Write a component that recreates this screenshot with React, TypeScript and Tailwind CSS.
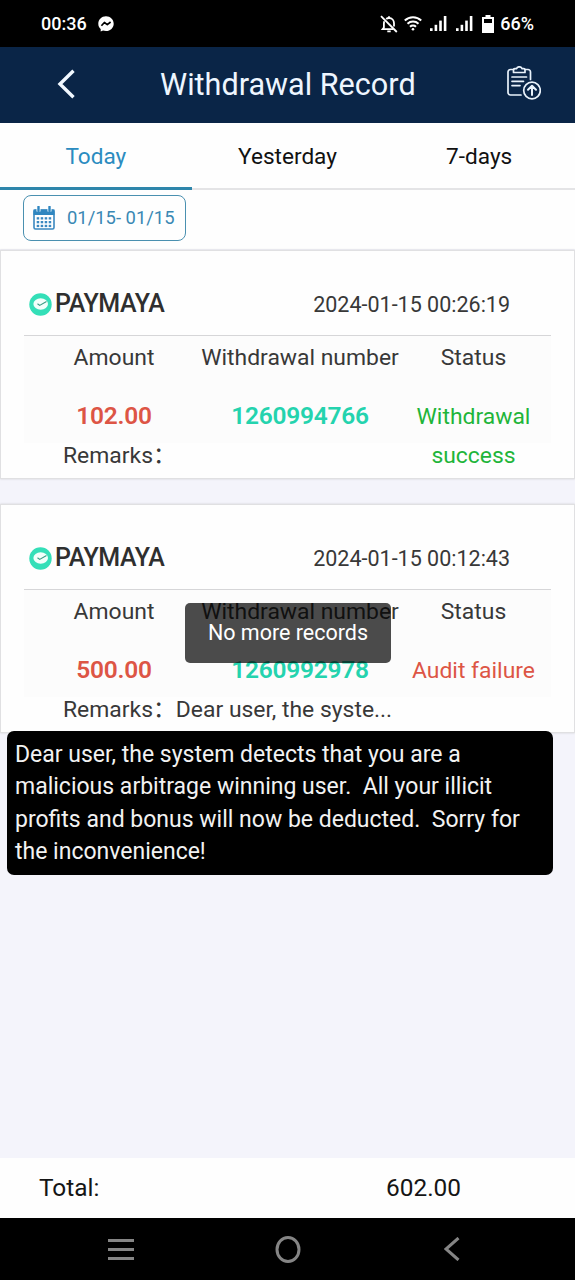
import { FunctionComponent, ReactNode } from "react";

interface IRecord {
    id: string
    time: string
    amount: string
    status: string
    statusColor: string
    remarks: string
}

const records: IRecord[] = [
    {
        id: "1260994766",
        time: "2024-01-15 00:26:19",
        amount: "102.00",
        status: "Withdrawal success",
        statusColor: "text-[#1fb53a]",
        remarks: "",
    },
    {
        id: "1260992978",
        time: "2024-01-15 00:12:43",
        amount: "500.00",
        status: "Audit failure",
        statusColor: "text-[#dd5545]",
        remarks: "Dear user, the syste...",
    },
];

const SignalIcon: FunctionComponent = () => (
    <svg className="w-[17px] h-4" viewBox="0 0 17 16" fill="#fff">
        <rect x="0" y="12.2" width="2.6" height="2.8" />
        <rect x="4.6" y="8.8" width="2.6" height="6.2" />
        <rect x="9.2" y="4.6" width="2.6" height="10.4" />
        <rect x="13.8" y="0" width="2.6" height="15" />
    </svg>
);

const StatusBar: FunctionComponent = () => (
    <div className="h-[47px] shrink-0 bg-black text-white flex items-center pl-[41px] pr-[41px]">
        <span className="text-[18px] leading-6 font-medium w-[57px] whitespace-nowrap">00:36</span>
        <svg className="w-4 h-4" viewBox="0 0 16 16">
            <path d="M8 .3C3.600.3.3 3.500.3 7.700c0 2.300.9 4.100 2.400 5.400v2.500l2.300-1.100c.9.300 1.900.500 3 .500 4.400 0 7.700-3.200 7.700-7.300S12.400.3 8 .3z" fill="#fff" />
            <path d="M3.400 9.800 6.400 6.500 9.300 8.600 12.600 6" fill="none" stroke="#000" strokeWidth="1.7" strokeLinejoin="round" />
        </svg>
        <div className="ml-auto flex items-center">
            <svg className="w-[18px] h-[18px] mr-[6px]" viewBox="0 0 18 18" fill="none" stroke="#fff" strokeWidth="1.8">
                <path d="M1 1.200 16.800 17" />
                <path d="M4.300 6.200C4 7 3.900 7.600 3.900 8.500v4L2.600 14.200h10.600" />
                <path d="M6.200 4C7 3.300 8 3 9 3c3 0 5 2.300 5 5.300v3.200" />
                <path d="M9 3V1.200M7.300 16.300h3.400" />
            </svg>
            <svg className="w-[18px] h-[15px] mr-[8px]" viewBox="0 0 18 15" fill="none" stroke="#fff" strokeWidth="2">
                <path d="M.8 4.500a11.800 11.800 0 0 1 16.400 0" />
                <path d="M3.500 7.800a8 8 0 0 1 11 0" />
                <path d="M6 10.800a4.400 4.400 0 0 1 6 0" />
                <circle cx="9" cy="13.300" r="1.300" fill="#fff" stroke="none" />
            </svg>
            <SignalIcon />
            <span className="w-[9px]" />
            <SignalIcon />
            <svg className="w-3 h-[18px] ml-[9px] mr-[6px]" viewBox="0 0 12 18">
                <path d="M3.500 0h5v2H12v16H0V2h3.500z" fill="#fff" />
                <rect x="2" y="4" width="8" height="4" fill="#000" />
            </svg>
            <span className="text-[18px] leading-6 font-medium whitespace-nowrap">66%</span>
        </div>
    </div>
);

const Header: FunctionComponent = () => (
    <div className="h-[76px] shrink-0 bg-[#0a2547] flex items-center pl-[57px] pr-[34px]">
        <svg className="w-[18px] h-[30px] mt-[-2px]" viewBox="0 0 18 30" fill="none" stroke="#f1f8ff" strokeWidth="3.400">
            <path d="M16.500 1.800 3 15 16.500 28.200" />
        </svg>
        <h1 className="ml-[85px] text-[30.6px] leading-9 text-[#eef6ff] whitespace-nowrap">Withdrawal Record</h1>
        <svg className="ml-auto w-[34px] h-[34px] mt-[-5px]" viewBox="0 0 34 34" fill="none" stroke="#e9f2fb" strokeWidth="1.700" strokeLinecap="round" strokeLinejoin="round">
            <path d="M6.500 3.500H3.500A2.500 2.500 0 0 0 1 6v20.500A2.500 2.500 0 0 0 3.500 29H14" />
            <path d="M18 3.500h3A2.500 2.500 0 0 1 23.500 6v7.500" />
            <path d="M6.500 6.500V4c0-.8.600-1.300 1.300-1.300H9.500C10 1.300 11 .8 12.300.8s2.300.5 2.800 1.900h1.700c.7 0 1.200.5 1.200 1.300v2.500z" />
            <path d="M5 11h14.500M5 15.300h11.500M5 19.600h8" />
            <circle cx="25" cy="24.500" r="8.300" />
            <path d="M25 29v-9M21 23.800l4-4 4 4" strokeWidth="2" />
        </svg>
    </div>
);

interface ITab {
    active?: boolean
    children: ReactNode
}

const Tab: FunctionComponent<ITab> = ({ active, children }) => (
    <div className={`flex-1 text-center text-[22.6px] pt-px ${active ? "leading-[65px] text-[#2b8cc0] border-b-[3px] border-[#2e86ab]" : "leading-[65px] text-[#111] border-b-2 border-[#e4e4e6]"}`}>
        {children}
    </div>
);

const DateFilter: FunctionComponent = () => (
    <div className="h-[59px] shrink-0 bg-[#fefefe] px-[23px] pt-[5px]">
        <div className="w-[163px] h-[46px] border border-[#4a90b0] rounded-lg flex items-center pl-[9px] text-[#3a88b4]">
            <svg className="w-[22px] h-[24px] mr-[12px]" viewBox="0 0 22 24">
                <rect x="1" y="4" width="20" height="19" rx="1.500" fill="#fff" stroke="#3a88c0" strokeWidth="1.600" />
                <path d="M.5 3.500h21V9H.5z" fill="#2f86c0" />
                <path d="M5.500.5v5M16.500.5v5" stroke="#fff" strokeWidth="4" />
                <path d="M5.500.8v4M16.500.8v4" stroke="#2f86c0" strokeWidth="2.400" strokeLinecap="round" />
                {[11.2, 15, 18.800].map((y) =>
                    [3.700, 7.700, 11.700, 15.700].map((x) => (
                        <rect key={`${x}-${y}`} x={x} y={y} width="2.500" height="2.300" fill="#3a88c0" />
                    ))
                )}
            </svg>
            <span className="text-[18.4px] leading-6 whitespace-nowrap">01/15- 01/15</span>
        </div>
    </div>
);

const BrandIcon: FunctionComponent = () => (
    <svg className="w-[23px] h-[23px] mt-[2px]" viewBox="0 0 23 23">
        <circle cx="11.500" cy="11.500" r="11.200" fill="#34dfb8" />
        <ellipse cx="11.700" cy="11" rx="7.300" ry="5.800" fill="#f2fffb" />
        <path d="M8.500 10.800 10.700 12.400 17.500 8.600" fill="none" stroke="#3c9c84" strokeWidth="1.200" />
    </svg>
);

const RecordCard: FunctionComponent<{ el: IRecord }> = ({ el }) => (
    <div className="h-[229px] shrink-0 bg-[#fefefe] border border-[#e0e0e2] shadow-[0_0_2px_#cfcfd2] px-[23px] text-[#383838]">
        <div className="h-[85px] flex items-center border-b border-[#d6d6d8] pl-[5px] pr-[41px] pt-[21px]">
            <BrandIcon />
            <span className="ml-[3px] text-[25px] leading-8 font-medium tracking-[-0.4px] text-[#2f2f2f]">PAYMAYA</span>
            <span className="ml-auto mt-[2px] text-[21.5px] leading-8 whitespace-nowrap">{el.time}</span>
        </div>
        <div className="grid grid-cols-[180px_192px_155px] text-center text-[22.9px] leading-[39px] bg-[linear-gradient(#fcfcfc_107px,#fefefe_107px)]">
            <div className="h-[60px] pt-[2px]">Amount</div>
            <div className="h-[60px] pt-[2px] -mx-3 whitespace-nowrap">Withdrawal number</div>
            <div className="h-[60px] pt-[2px]">Status</div>
            <div className="h-10 text-[24.5px] tracking-[-0.25px] font-semibold text-[#dd5545]">{el.amount}</div>
            <div className="h-10 text-[24.5px] tracking-[-0.25px] font-semibold text-[#24d3ae]">{el.id}</div>
            <div className={`row-span-2 pt-px ${el.statusColor}`}>{el.status}</div>
            <div className="col-span-2 h-[39px] pl-[39px] text-left whitespace-nowrap">
                Remarks<span className="font-['Noto_Sans_CJK_SC',sans-serif] leading-none">：</span>{el.remarks}
            </div>
        </div>
    </div>
);

const NavBar: FunctionComponent = () => (
    <div className="h-[62px] shrink-0 bg-black flex items-center pl-[108px]">
        <svg className="w-[27px] h-[24px]" viewBox="0 0 27 24" stroke="#858585" strokeWidth="3">
            <path d="M0 3.500h26M0 12.500h26M0 21.500h26" />
        </svg>
        <svg className="ml-[140px] w-[26px] h-[28px]" viewBox="0 0 26 28" fill="none" stroke="#858585" strokeWidth="3">
            <ellipse cx="13" cy="14.500" rx="11" ry="12" />
        </svg>
        <svg className="ml-[143px] w-[16px] h-[24px]" viewBox="0 0 16 24" fill="none" stroke="#858585" strokeWidth="3">
            <path d="M14.500 1 2 12l12.500 11" />
        </svg>
    </div>
);

const App: FunctionComponent = () => {
    return (
        <div className="relative w-[575px] h-[1280px] overflow-hidden flex flex-col bg-[#f4f4fb] font-[Roboto,sans-serif]">
            <StatusBar />
            <Header />
            <div className="h-[67px] shrink-0 bg-[#fefefe] flex">
                <Tab active>Today</Tab>
                <Tab>Yesterday</Tab>
                <Tab>7-days</Tab>
            </div>
            <DateFilter />
            <div className="mt-px flex flex-col gap-[25px]">
                {records.map((el) => (
                    <RecordCard key={el.id} el={el} />
                ))}
            </div>
            <div className="mt-auto h-[60px] shrink-0 bg-[#fefefe] flex items-center pl-[39px] pr-[114px] justify-between text-[24.4px] text-[#151515]">
                <span>Total:</span>
                <span>602.00</span>
            </div>
            <NavBar />

            {/* toast */}
            <div className="absolute left-[185px] top-[603px] w-[206px] h-[60px] rounded-[5px] bg-black/70 text-white text-[21.5px] leading-[60px] text-center whitespace-nowrap">No more records</div>

            {/* full remark popover */}
            <div className="absolute left-[7px] top-[731px] w-[546px] h-[144px] rounded-[7px] bg-black text-[#f2f2f2] px-2 pt-2 text-[23px] leading-[32.3px] whitespace-pre">
                {"Dear user, the system detects that you are a\nmalicious arbitrage winning user.  All your illicit\nprofits and bonus will now be deducted.  Sorry for\nthe inconvenience!"}
            </div>
        </div>
    );
};

export default App;
